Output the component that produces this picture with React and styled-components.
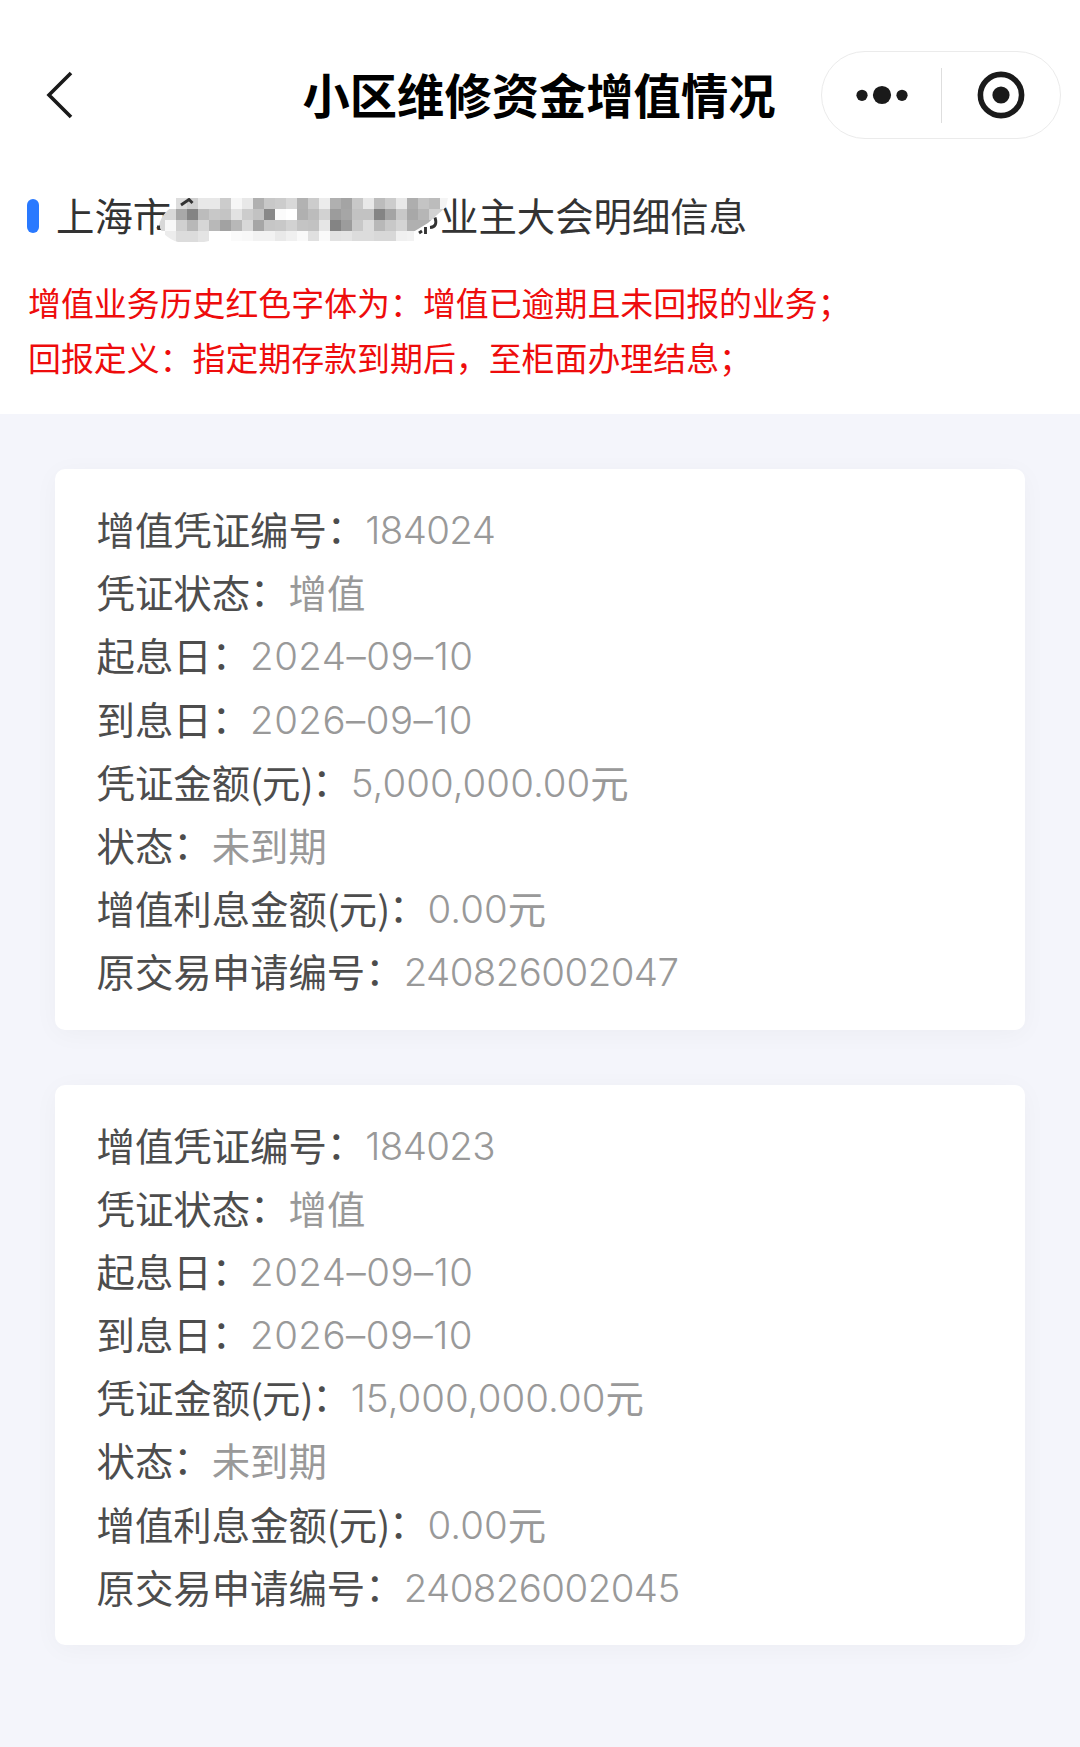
import React from 'react'
import styled, { createGlobalStyle } from 'styled-components'

const GlobalStyle = createGlobalStyle`
  * {
    box-sizing: border-box;
  }

  body {
    margin: 0;
    background-color: #f4f5fb;
    font-family: 'Noto Sans CJK SC', sans-serif;
  }
`

const Page = styled.div`
  width: 1080px;
  min-height: 1747px;
`

const Top = styled.header`
  height: 414px;
  background-color: white;
`

const NavBar = styled.div`
  display: grid;
  grid-template-columns: 258px 1fr 259px;
  align-items: center;
  height: 190px;
  margin-bottom: 4px;

  h1 {
    margin: 0;
    padding: 0 1px 2px 0;
    text-align: center;
    white-space: nowrap;
    font-size: 47.3px;
    line-height: 68px;
    font-weight: 700;
    color: black;
  }
`

const Back = styled.button`
  display: flex;
  padding: 0 0 0 44px;
  border: 0;
  background: none;
  cursor: pointer;
`

const Capsule = styled.div`
  display: flex;
  align-items: center;
  width: 240px;
  height: 88px;
  border: 1px solid #ebebeb;
  border-radius: 44px;
`

const CapsuleButton = styled.button`
  display: flex;
  flex: 1;
  align-items: center;
  justify-content: center;
  padding: 0 0 0 1px;
  border: 0;
  background: none;
  cursor: pointer;
`

const Divider = styled.div`
  width: 1px;
  height: 55px;
  background-color: #dedede;
`

const SectionTitle = styled.h2`
  display: flex;
  align-items: center;
  height: 44px;
  margin: 0;
  padding: 0 0 4px 27px;
  font-size: 38.4px;
  line-height: 44px;
  font-weight: 400;
  color: #333;
  white-space: nowrap;

  &:before {
    content: '';
    width: 12px;
    height: 34px;
    margin: 4px 17px 0 0;
    border-radius: 6px;
    background-color: #2979ff;
  }
`

const Redacted = styled.span`
  position: relative;
  width: 7em;
  height: 44px;

  svg {
    position: absolute;
    left: -16px;
    top: 6px;
  }
`

const Notes = styled.div`
  padding: 36px 28px 0;

  p {
    margin: 0;
    font-size: 32.92px;
    line-height: 55px;
    color: #ee0c0c;
  }
`

const Cards = styled.main`
  display: flex;
  flex-direction: column;
  gap: 55px;
  padding: 55px;
`

const Card = styled.section`
  height: 560.5px;
  padding: 28px 41.5px;
  border-radius: 10px;
  background-color: white;
  box-shadow: 0 4px 26px rgba(0, 0, 0, .035);
`

const Row = styled.div`
  height: 63.2px;
  font-size: 38.4px;
  line-height: 63.2px;
  white-space: nowrap;
`

const Label = styled.span`
  color: #4d4d4d;
`

const Paren = styled.span`
  letter-spacing: -1.1px;
`

const Colon = styled.span`
  line-height: 1;
  vertical-align: 2px;
`

const Value = styled.span`
  color: #999;
  font-family: ${props => (props.cjk ? '' : 'Inter, ')}'Noto Sans CJK SC', sans-serif;
  font-weight: ${props => (props.cjk ? 400 : 350)};
  line-height: 1;
  letter-spacing: ${props => props.spacing || 0}px;
  vertical-align: ${props => (props.cjk ? 0 : 1)}px;
`

const Unit = styled.span`
  color: #999;
`

// grey levels of the masked name, one row per line
const mosaic = [
  '-- dd d0 e8 e8 cc f6 e8 b0 c8 cc d8 b2 cc ec b0 a4 c8 e8 bc cc e8 ae c4 bc f4',
  'd8 a8 84 bc c8 c4 e2 cc c2 88 fb ff b0 bc d2 9c a6 c2 c2 84 a4 c8 a8 b6 d2 d2',
  'f8 d0 b8 d6 b8 a2 b8 d8 a6 c6 c8 d2 c4 c2 e6 84 9c c8 dc b8 c8 d4 b0 b0 b0 --',
  'ec dc dc e4 ff ff fa f8 f2 f2 e9 f0 f9 e0 fa e2 e4 dc dc d8 d8 f0 f2 -- -- --'
].map(line => line.split(' '))

const Mosaic = () =>
  <svg width="296" height="46" viewBox="155 198 296 46">
    <clipPath id="mask">
      <path d="M159 226 Q160 218 167 211 L176 203 V198 H448 L446 207 L428 223 L414 231.500 V241 H358 L352 241 H209 L204 242 H178 Q170 240 162 232 Z" />
    </clipPath>
    <g clipPath="url(#mask)" shapeRendering="crispEdges">
      <rect x="155" y="209" width="10" height="22" fill="#d8d8d8" />
      {mosaic.map((line, y) =>
        line.map((level, x) =>
          level !== '--' &&
            <rect
              key={`${x}-${y}`}
              x={165 + x * 11}
              y={198 + y * 11}
              width="11"
              height="11"
              fill={`#${level}${level}${level}`}
            />
        )
      )}
    </g>
    <g fill="none" stroke="#333" strokeWidth="2.9">
      <path d="M181 205 L189 199.500 L192.500 203" />
      <path d="M157 227 H160" />
      <path d="M419 233 L422 231 M425.500 227 V234 M435 217.500 Q438 227 430 227.500" />
    </g>
  </svg>

const rows = [
  { key: 'no', label: '增值凭证编号：', spacing: -0.6 },
  { key: 'kind', label: '凭证状态：', cjk: true },
  { key: 'start', label: '起息日：', spacing: 0.5 },
  { key: 'end', label: '到息日：', spacing: 0.5 },
  { key: 'amount', label: '凭证金额(元)：', unit: '元', spacing: 0.05 },
  { key: 'state', label: '状态：', cjk: true },
  { key: 'interest', label: '增值利息金额(元)：', unit: '元', spacing: 0.05 },
  { key: 'apply', label: '原交易申请编号：', spacing: -0.55 }
]

const vouchers = [
  {
    no: '184024',
    kind: '增值',
    start: '2024–09–10',
    end: '2026–09–10',
    amount: '5,000,000.00',
    state: '未到期',
    interest: '0.00',
    apply: '240826002047'
  },
  {
    no: '184023',
    kind: '增值',
    start: '2024–09–10',
    end: '2026–09–10',
    amount: '15,000,000.00',
    state: '未到期',
    interest: '0.00',
    apply: '240826002045'
  }
]

const renderLabel = label =>
  label.split(/([()：])/).map((part, i) => {
    if (part === '：') return <Colon key={i}>{part}</Colon>
    return /[()]/.test(part) ? <Paren key={i}>{part}</Paren> : part
  })

const Voucher = ({ voucher }) =>
  <Card>
    {rows.map(({ key, label, unit, cjk, spacing }) =>
      <Row key={key}>
        <Label>{renderLabel(label)}</Label>
        <Value cjk={cjk} spacing={spacing}>{voucher[key]}</Value>
        {unit && <Unit>{unit}</Unit>}
      </Row>
    )}
  </Card>

const App = () =>
  <Page>
    <GlobalStyle />
    <Top>
      <NavBar>
        <Back aria-label="返回">
          <svg width="30" height="48" viewBox="0 0 30 48" fill="none">
            <path d="M27 2 L5 24 L27 46" stroke="#1a1a1a" strokeWidth="3.600" />
          </svg>
        </Back>
        <h1>小区维修资金增值情况</h1>
        <Capsule>
          <CapsuleButton aria-label="更多">
            <svg width="54" height="24" viewBox="0 0 54 24" fill="#1a1a1a">
              <circle cx="7" cy="12.300" r="5.600" />
              <circle cx="27" cy="12" r="9.100" />
              <circle cx="47" cy="12.300" r="5.600" />
            </svg>
          </CapsuleButton>
          <Divider />
          <CapsuleButton aria-label="关闭">
            <svg width="50" height="50" viewBox="0 0 50 50" fill="#1a1a1a">
              <circle cx="25" cy="25" r="20.600" fill="none" stroke="#1a1a1a" strokeWidth="5.600" />
              <circle cx="25" cy="25" r="8.600" />
            </svg>
          </CapsuleButton>
        </Capsule>
      </NavBar>
      <SectionTitle>
        上海市
        <Redacted><Mosaic /></Redacted>
        业主大会明细信息
      </SectionTitle>
      <Notes>
        <p>增值业务历史红色字体为：增值已逾期且未回报的业务；</p>
        <p>回报定义：指定期存款到期后，至柜面办理结息；</p>
      </Notes>
    </Top>
    <Cards>
      {vouchers.map(voucher => <Voucher key={voucher.no} voucher={voucher} />)}
    </Cards>
  </Page>

export default App
